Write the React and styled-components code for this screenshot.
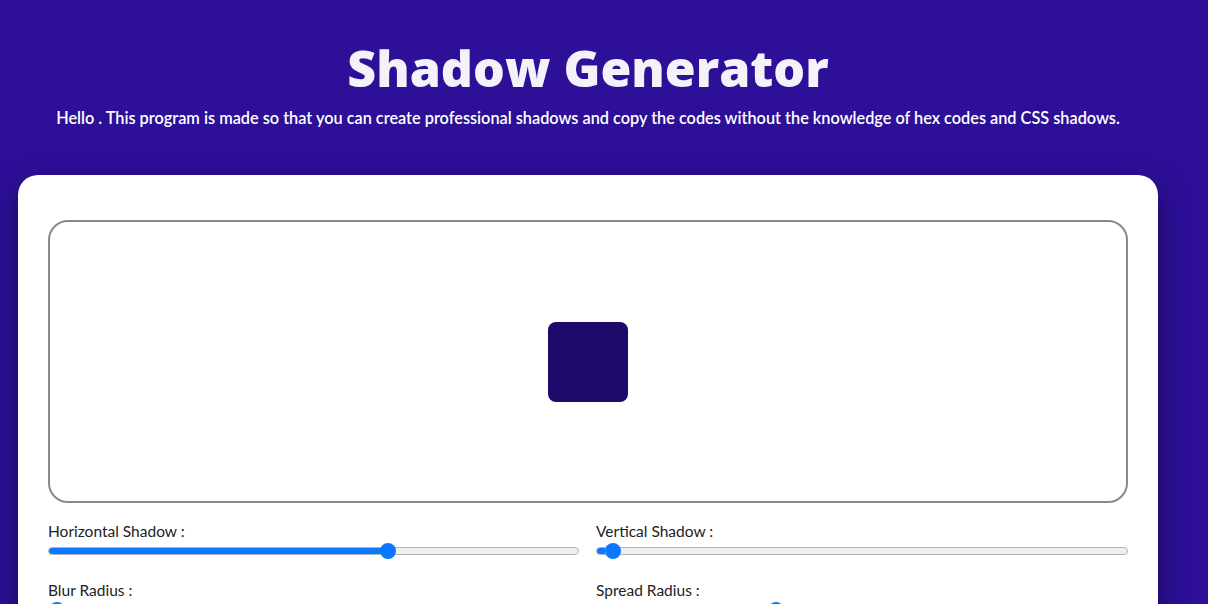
import React, { useState } from 'react';
import styled, { createGlobalStyle } from 'styled-components';

const GlobalStyle = createGlobalStyle`
  html, body { margin: 0; padding: 0; }
  body {
    background: #2d0f98;
    font-family: 'Lato', 'Open Sans', sans-serif;
    overflow: hidden;
  }
`;

const Page = styled.div`
  width: 1140px;
  margin-left: 18px;
  padding-top: 36px;
`;

const Header = styled.header`
  text-align: center;
  color: #f3f2f8;
`;

const Title = styled.h1`
  margin: 0;
  font-family: 'Open Sans', sans-serif;
  font-weight: 800;
  font-size: 50px;
  line-height: 64px;
`;

const Subtitle = styled.p`
  margin: 8px 0 0;
  font-size: 16.3px;
  font-weight: 600;
  color: #ffffff;
`;

const Card = styled.main`
  margin-top: 48px;
  background: #fff;
  border-radius: 20px;
  padding: 45px 30px 40px;
  box-shadow: 0 12px 30px rgba(10, 0, 40, 0.55);
`;

const Preview = styled.div`
  height: 279px;
  border: 2px solid #8a8a8a;
  border-radius: 20px;
  display: flex;
  align-items: center;
  justify-content: center;
`;

const Box = styled.div`
  width: 80px;
  height: 80px;
  border-radius: 8px;
  background: #1f0a6b;
`;

const Controls = styled.div`
  display: grid;
  grid-template-columns: 531px 532px;
  column-gap: 17px;
  row-gap: 20px;
  margin-top: 19px;
`;

const Field = styled.label`
  display: flex;
  flex-direction: column;
  gap: 1px;
  color: #222;
  font-size: 15.5px;
`;

const Range = styled.input.attrs({ type: 'range' })`
  -webkit-appearance: none;
  appearance: none;
  width: 100%;
  height: 8px;
  margin: 6px 0;
  border-radius: 5px;
  border: 1px solid #b4b4b4;
  box-sizing: border-box;
  outline: none;

  &::-webkit-slider-thumb {
    -webkit-appearance: none;
    width: 16px;
    height: 16px;
    border-radius: 50%;
    background: #0b78ff;
    border: none;
    cursor: pointer;
  }
`;

const sliders = [
  { key: 'h', label: 'Horizontal Shadow :', min: -100, max: 100, value: 29 },
  { key: 'v', label: 'Vertical Shadow :', min: 0, max: 200, value: 3 },
  { key: 'b', label: 'Blur Radius :', min: 0, max: 100, value: 0 },
  { key: 's', label: 'Spread Radius :', min: -50, max: 100, value: 0 },
];

export default function App() {
  const [vals, setVals] = useState(
    Object.fromEntries(sliders.map((s) => [s.key, s.value]))
  );

  return (
    <>
      <GlobalStyle />
      <Page>
        <Header>
          <Title>Shadow Generator</Title>
          <Subtitle>
            Hello . This program is made so that you can create professional shadows and copy the codes without the knowledge of hex codes and CSS shadows.
          </Subtitle>
        </Header>
        <Card>
          <Preview>
            <Box />
          </Preview>
          <Controls>
            {sliders.map((s) => {
              const pct = ((vals[s.key] - s.min) / (s.max - s.min)) * 100;
              return (
                <Field key={s.key}>
                  {s.label}
                  <Range
                    min={s.min}
                    max={s.max}
                    value={vals[s.key]}
                    onChange={(e) => setVals({ ...vals, [s.key]: Number(e.target.value) })}
                    style={{
                      background: `linear-gradient(to right, #0b78ff ${pct}%, #efefef ${pct}%)`,
                    }}
                  />
                </Field>
              );
            })}
          </Controls>
        </Card>
      </Page>
    </>
  );
}
